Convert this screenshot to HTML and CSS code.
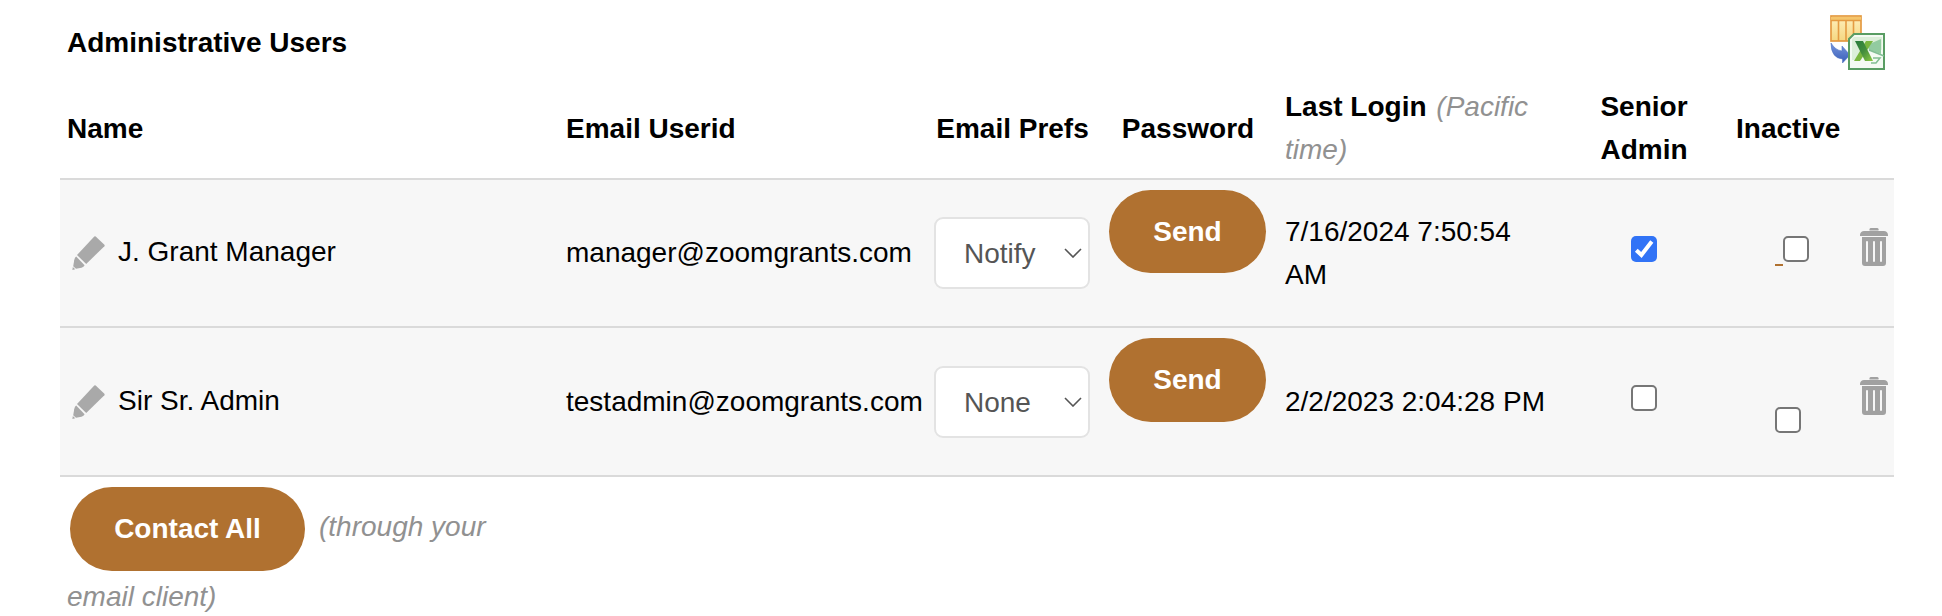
FILE: index.html
```html
<!DOCTYPE html>
<html lang="en">
<head>
<meta charset="UTF-8">
<meta name="viewport" content="width=device-width, initial-scale=1.0">
<title>Administrative Users</title>
<link rel="stylesheet" href="styles.css">
</head>
<body>

<!-- Shared icons -->
<svg class="icon-defs" aria-hidden="true">
  <symbol id="pencil" viewBox="0 0 33 34">
    <path d="M22.3 .6Q23 0 23.7 .6L32.4 8.8Q33 9.5 32.4 10.2L14.2 28L5 19Z"/>
    <path d="M4.2 20.4L12.6 29.3Q11.8 31.2 9.5 31.7L4 32.7L1.2 30.2L2.2 24.2Q2.8 21.2 4.2 20.4Z"/>
    <path d="M.8 31L3.2 33.2L.4 34Z"/>
  </symbol>
  <symbol id="trash" viewBox="0 0 28 38">
    <path d="M9.5 2.5V1.2Q9.5 0 11 0H17Q18.5 0 18.5 1.2V2.5Z"/>
    <path d="M0 8V6.5Q.6 3 4 3H24Q27.4 3 28 6.5V8Z"/>
    <path fill-rule="evenodd" d="M2 9H26V35Q26 38 23 38H5Q2 38 2 35ZM6 14V33Q6 34 7 34T8 33V14Q8 13 7 13T6 14ZM13 14V33Q13 34 14 34T15 33V14Q15 13 14 13T13 14ZM20 14V33Q20 34 21 34T22 33V14Q22 13 21 13T20 14Z"/>
  </symbol>
</svg>

<div class="users">
  <div class="title-bar">
    <h1 class="title">Administrative Users</h1>
    <svg class="export" viewBox="0 0 56 58">
      <defs>
        <linearGradient id="sheet" x1="0" y1="0" x2="0" y2="1">
          <stop offset="0" stop-color="#fff0bd"/><stop offset="1" stop-color="#f5d781"/>
        </linearGradient>
        <linearGradient id="arrow" x1="0" y1="0" x2="0" y2="1">
          <stop offset="0" stop-color="#7795dc"/><stop offset="1" stop-color="#395fb9"/>
        </linearGradient>
        <linearGradient id="excel" x1="0" y1="0" x2="1" y2="1">
          <stop offset="0" stop-color="#287c3d"/><stop offset=".5" stop-color="#438e3d"/><stop offset="1" stop-color="#8cca42"/>
        </linearGradient>
      </defs>
      <rect x="1" y="2" width="30" height="25" fill="url(#sheet)" stroke="#e49b42" stroke-width="1.7"/>
      <path d="M1 3H31V6H1Z" fill="#f5c56b"/>
      <path d="M1 6.5H31M8.5 6V27M16 6V27M23.5 6V27" stroke="#e49b42" stroke-width="1.6"/>
      <path d="M1 29Q5 36 12 37V32L20 41L12.5 49V45Q1 44 1 29Z" fill="url(#arrow)" stroke="#5275c3" stroke-width=".6"/>
      <path d="M24 20H54V55H19V25Z" fill="#f4faf3" stroke="#599d63" stroke-width="2"/>
      <path d="M24 23H52V36L39 33L31 46H22V25Z" fill="#dcefd9"/>
      <path d="M37 31L51 25V40L39 36Z" fill="#92cba0"/>
      <path d="M39 36L54 42M43 44H50L46 49H41" fill="none" stroke="#81bd93" stroke-width="1.5"/>
      <path d="M36 27H43L30 47H24Z" fill="#79b63f"/>
      <path d="M25 27H33L43 47H35Z" fill="url(#excel)"/>
    </svg>
  </div>

  <div class="row head">
    <div class="cell">Name</div>
    <div class="cell">Email Userid</div>
    <div class="cell center">Email Prefs</div>
    <div class="cell center">Password</div>
    <div class="cell"><div class="login">Last Login <span class="hint">(Pacific<br>time)</span></div></div>
    <div class="cell center">Senior<br>Admin</div>
    <div class="cell inactive">Inactive</div>
    <div class="cell"></div>
  </div>

  <div class="row user">
    <div class="cell name"><svg class="pencil"><use href="#pencil"/></svg>J. Grant Manager</div>
    <div class="cell email">manager@zoomgrants.com</div>
    <div class="cell prefs">
      <div class="select">Notify<svg class="chevron" viewBox="0 0 18 10"><path d="M1 1L9 9L17 1"/></svg></div>
    </div>
    <div class="cell password"><button class="button">Send</button></div>
    <div class="cell date two-line">7/16/2024 7:50:54<br>AM</div>
    <div class="cell senior">
      <span class="checkbox checked"><svg viewBox="0 0 26 26"><path d="M5.3 14.2L10.4 19L20.8 5.6"/></svg></span>
    </div>
    <div class="cell active"><span class="dash"></span><span class="checkbox"></span></div>
    <div class="cell delete"><svg class="trash"><use href="#trash"/></svg></div>
  </div>

  <div class="row user second">
    <div class="cell name"><svg class="pencil"><use href="#pencil"/></svg>Sir Sr. Admin</div>
    <div class="cell email">testadmin@zoomgrants.com</div>
    <div class="cell prefs">
      <div class="select">None<svg class="chevron" viewBox="0 0 18 10"><path d="M1 1L9 9L17 1"/></svg></div>
    </div>
    <div class="cell password"><button class="button">Send</button></div>
    <div class="cell date">2/2/2023 2:04:28 PM</div>
    <div class="cell senior"><span class="checkbox"></span></div>
    <div class="cell active lower"><span class="checkbox"></span></div>
    <div class="cell delete"><svg class="trash"><use href="#trash"/></svg></div>
  </div>

  <div class="contact">
    <div class="contact-line"><button class="button wide">Contact All</button><span class="hint">(through your</span></div>
    <div class="hint">email client)</div>
  </div>
</div>

</body>
</html>
```

FILE: styles.css
```css
* {
  box-sizing: border-box;
}

html {
  height: 616px;
  overflow: hidden;
}

body {
  height: 616px;
  margin: 0;
  overflow: hidden;
  background: #fff;
  color: #000;
  font-family: "Liberation Sans", Arial, sans-serif;
  font-size: 28px;
  line-height: 43px;
}

.icon-defs {
  display: none;
}

.users {
  width: 1834px;
  height: 616px;
  margin-left: 60px;
  overflow: hidden;
}

.title-bar {
  display: flex;
  justify-content: space-between;
  height: 85px;
  padding: 14px 8px 0 7px;
}

.title {
  margin: 7px 0 0;
  font-size: 28px;
  line-height: 43px;
}

.export {
  width: 56px;
  height: 58px;
}

.row {
  display: grid;
  grid-template-columns: 498px 368px 172px 179px 290px 153px 136px 38px;
  border-bottom: 2px solid #dadada;
}

.cell {
  display: flex;
  align-items: flex-start;
  padding: 0 7px 0 8px;
  white-space: nowrap;
}

.cell:first-child {
  padding-left: 7px;
}

.head {
  height: 95px;
  padding-bottom: 7px;
  font-weight: bold;
}

.head .cell {
  align-items: center;
}

.head .center {
  justify-content: center;
}

.head .inactive {
  padding-left: 16px;
}

.hint {
  color: #919191;
  font-style: italic;
  font-weight: normal;
}

.login .hint {
  margin-left: 2px;
}

.user {
  height: 148px;
  background: #f7f7f7;
}

.second {
  height: 149px;
}

.user .name {
  padding: 50px 0 0 12px;
}

.pencil {
  width: 33px;
  height: 34px;
  margin: 6px 13px 0 0;
  fill: #a9a9a9;
}

.email {
  padding-top: 51px;
}

.prefs {
  padding: 37px 8px 0;
}

.select {
  display: flex;
  align-items: center;
  justify-content: space-between;
  width: 156px;
  height: 72px;
  padding: 0 6px 0 28px;
  border: 2px solid #e3e3e3;
  border-radius: 9px;
  background: #fff;
  color: #555;
}

.chevron {
  width: 18px;
  height: 10px;
  margin-bottom: 1px;
  fill: none;
  stroke: #555;
  stroke-width: 1.6;
}

.password {
  padding: 10px 11px 0;
}

.button {
  width: 157px;
  height: 83px;
  padding: 0;
  border: 0;
  border-radius: 42px;
  background: #b07130;
  color: #fff;
  font: bold 28px/43px "Liberation Sans", Arial, sans-serif;
}

.date {
  padding-top: 51px;
}

.two-line {
  padding-top: 30px;
}

.user .senior {
  justify-content: center;
  padding: 56px 7px 0;
}

.active {
  padding: 56px 0 0 55px;
}

.checkbox {
  width: 26px;
  height: 26px;
  border: 2px solid #767676;
  border-radius: 5px;
  background: #fff;
}

.checked {
  display: flex;
  border: 0;
  background: #3173f6;
}

.checked svg {
  width: 26px;
  height: 26px;
  fill: none;
  stroke: #fff;
  stroke-width: 4;
}

.dash {
  width: 8px;
  height: 2px;
  margin-top: 28px;
  background: #b07130;
}

.delete {
  padding: 48px 0 0 4px;
}

.trash {
  width: 28px;
  height: 38px;
  fill: #a1a1a1;
}

/* The second row is one pixel taller */
.second .name {
  padding-top: 51px;
}

.second .email,
.second .date {
  padding-top: 52px;
}

.second .prefs {
  padding-top: 38px;
}

.second .senior {
  padding-top: 57px;
}

.second .lower {
  padding-top: 79px;
}

.second .delete {
  padding-top: 49px;
}

.second .button,
.wide {
  height: 84px;
  padding-bottom: 2px;
}

.contact {
  padding: 10px 0 0 7px;
}

.contact-line {
  display: flex;
  height: 88px;
  padding-left: 3px;
}

.contact-line .hint {
  margin: 18px 0 0 14px;
}

.wide {
  width: 235px;
}
```
